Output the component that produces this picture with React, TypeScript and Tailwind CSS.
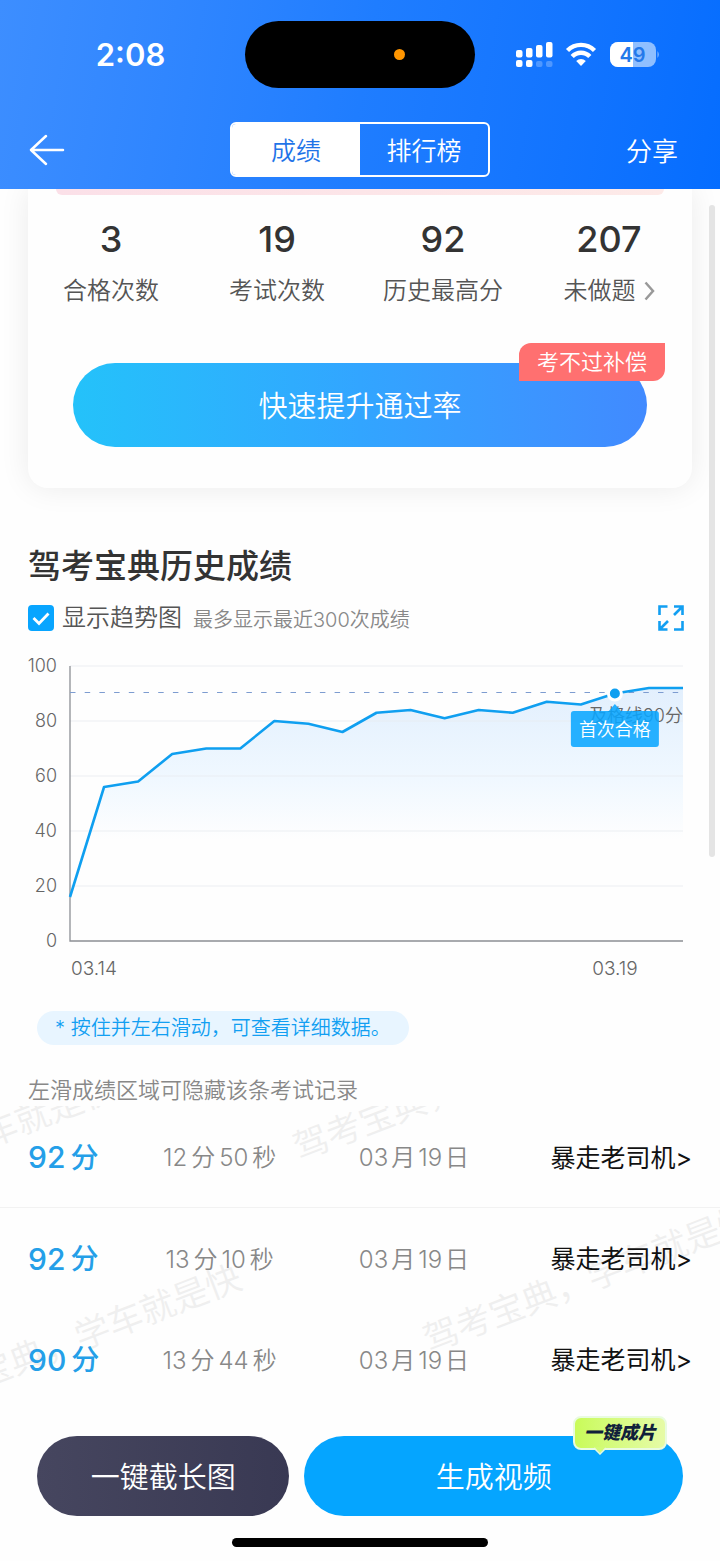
import { useState } from "react";

const stats = [
  { value: "3", label: "合格次数" },
  { value: "19", label: "考试次数" },
  { value: "92", label: "历史最高分" },
  { value: "207", label: "未做题", link: true },
];

const scores = [16, 56, 58, 68, 70, 70, 80, 79, 76, 83, 84, 81, 84, 83, 87, 86, 90, 92, 92];

const records = [
  { score: 92, min: 12, sec: 50, month: "03", day: "19", rank: "暴走老司机" },
  { score: 92, min: 13, sec: 10, month: "03", day: "19", rank: "暴走老司机" },
  { score: 90, min: 13, sec: 44, month: "03", day: "19", rank: "暴走老司机" },
];

// chart geometry, in svg units
const LEFT = 42;
const RIGHT = 655;
const TOP = 16;
const BOTTOM = 291;

const px = (i: number) => LEFT + (i * (RIGHT - LEFT)) / (scores.length - 1);
const py = (v: number) => BOTTOM - (v * (BOTTOM - TOP)) / 100;

function StatusIcons() {
  return (
    <svg width="144" height="28" viewBox="0 0 144 28" aria-hidden="true">
      <g fill="#fff">
        <rect x="0" y="9" width="6.500" height="7.500" rx="2" />
        <rect x="10" y="7" width="6.500" height="9.500" rx="2" />
        <rect x="20" y="4" width="6.500" height="12.500" rx="2" />
        <rect x="30" y="1" width="6.500" height="15.500" rx="2" />
        <rect x="0" y="19" width="6.500" height="7" rx="2" />
        <rect x="10" y="19" width="6.500" height="7" rx="2" />
        <rect x="20" y="20" width="6.500" height="6" rx="2" opacity="0.25" />
        <rect x="30" y="20" width="6.500" height="6" rx="2" opacity="0.25" />
      </g>
      <g fill="none" stroke="#fff" strokeWidth="4.4">
        <path d="M51.5 9.500 A19 19 0 0 1 78.5 9.500" />
        <path d="M56.2 15.600 A12 12 0 0 1 73.8 15.600" />
      </g>
      <path d="M60.2 20 A7 7 0 0 1 69.8 20 L65 25 Z" fill="#fff" />
      <clipPath id="charge">
        <rect x="94" y="1" width="23" height="25" />
      </clipPath>
      <rect x="94" y="1" width="46" height="25" rx="8" fill="#8fbfff" />
      <rect x="94" y="1" width="46" height="25" rx="8" fill="#fff" clipPath="url(#charge)" />
      <path d="M141.5 10 Q144 13.500 141.500 17 Z" fill="#8fbfff" />
      <text x="116.500" y="20.500" textAnchor="middle" fontSize="20" fontWeight="600" fill="#2379ea">
        49
      </text>
    </svg>
  );
}

function Header() {
  const [tab, setTab] = useState("score");
  const on = "bg-white text-[#1f74e8]";
  const off = "text-white";

  return (
    <header className="relative bg-linear-100 from-[#3d8eff] via-[#1f7dff] to-[#056dff] pt-[21px] pb-3 text-white">
      <div className="grid grid-cols-[1fr_230px_1fr] items-center">
        <div className="pl-4 text-center text-[31px] leading-10 font-semibold">2:08</div>
        <div className="flex h-[67px] items-center rounded-full bg-black pl-[149px]">
          <span className="size-[11px] rounded-full bg-[#ff9500]" />
        </div>
        <div className="pl-[41px]">
          <StatusIcons />
        </div>
      </div>
      <div className="mt-[34px] grid grid-cols-[1fr_260px_1fr] items-center">
        <button aria-label="返回" className="ml-[29px] justify-self-start">
          <svg width="36" height="32" viewBox="0 0 36 32" fill="none" stroke="#fff" strokeWidth="2.5" strokeLinecap="round" strokeLinejoin="round">
            <path d="M17 2 L2 16 L17 30 M2 16 H34" />
          </svg>
        </button>
        <div className="grid h-[55px] grid-cols-2 overflow-hidden rounded-md border-2 border-white text-[25px]">
          <button className={`pt-1 ${tab === "score" ? on : off}`} onClick={() => setTab("score")}>
            成绩
          </button>
          <button className={`pt-1 ${tab === "rank" ? on : off}`} onClick={() => setTab("rank")}>
            排行榜
          </button>
        </div>
        <button className="mr-[42px] justify-self-end pt-1 text-[26px]">分享</button>
      </div>
    </header>
  );
}

function SummaryCard() {
  return (
    <section className="mx-7 rounded-b-[20px] pb-[41px] shadow-[0_0_30px_rgba(0,0,0,0.08)]">
      <div className="mx-7 h-[6px] rounded-b-lg bg-linear-to-r from-[#fbe0e8] to-[#fdeae8]" />
      <dl className="mt-6 grid grid-cols-4 text-center">
        {stats.map((s) => (
          <div key={s.label} className="flex flex-col-reverse gap-4">
            <dt className="flex items-center justify-center gap-2 text-2xl leading-8 text-[#555]">
              {s.label}
              {s.link && (
                <svg width="11" height="20" viewBox="0 0 11 20" fill="none" stroke="#999" strokeWidth="2.5">
                  <path d="M1.500 1.500 L9 10 L1.500 18.500" />
                </svg>
              )}
            </dt>
            <dd className="text-4xl leading-10 font-medium text-[#333]">{s.value}</dd>
          </div>
        ))}
      </dl>
      <div className="relative mx-[45px] mt-14">
        <button className="h-[84px] w-full rounded-full bg-linear-to-r from-[#24c2fa] via-[#32a5ff] to-[#418aff] pt-1 text-[29px] text-white">
          快速提升通过率
        </button>
        <span className="absolute -top-5 -right-[18px] rounded-tl-xl rounded-br-xl bg-[#ff7070] px-[18px] text-[22px] leading-[38px] text-white">
          考不过补偿
        </span>
      </div>
    </section>
  );
}

function TrendChart() {
  const line = scores.map((v, i) => `${px(i)},${py(v)}`).join(" ");
  const passX = px(16);

  return (
    <svg className="mt-4 block w-full" viewBox="0 0 664 335" fontSize="18" fill="#666">
      <defs>
        <linearGradient id="area" gradientUnits="userSpaceOnUse" x1="0" y1="37" x2="0" y2="190">
          <stop offset="0" stopColor="#e2effd" />
          <stop offset="0.6" stopColor="#f0f8ff" />
          <stop offset="1" stopColor="#fefefe" />
        </linearGradient>
      </defs>
      <polygon points={`${LEFT},${BOTTOM} ${line} ${RIGHT},${BOTTOM}`} fill="url(#area)" />
      {[0, 20, 40, 60, 80, 100].map((v) => (
        <g key={v}>
          {v > 0 && <line x1={LEFT} x2={RIGHT} y1={py(v)} y2={py(v)} stroke="#e9ebf0" strokeOpacity="0.8" />}
          <text x="29" y={py(v) + 6} textAnchor="end">
            {v}
          </text>
        </g>
      ))}
      <path d={`M${LEFT} ${TOP} V${BOTTOM} H${RIGHT}`} fill="none" stroke="#8c8f94" strokeWidth="1.300" />
      <line x1={LEFT} x2={RIGHT} y1="42.500" y2="42.500" stroke="#7d9cd0" strokeWidth="1" strokeDasharray="5.500 9.200" />
      <polyline points={line} fill="none" stroke="#0f9ff0" strokeWidth="2.600" strokeLinejoin="round" />
      <text x={RIGHT} y="72" textAnchor="end">
        及格线90分
      </text>
      <circle cx={passX} cy={py(90)} r="6.500" fill="#0f9ff0" stroke="#fff" strokeWidth="3" />
      <g fill="#08a5ff" fillOpacity="0.87">
        <rect x={passX - 44} y="61" width="88" height="36" rx="3" />
        <path d={`M${passX - 6} 61 L${passX} 54 L${passX + 6} 61 Z`} />
      </g>
      <text x={passX} y="86" textAnchor="middle" fill="#fff">
        首次合格
      </text>
      <g fontSize="19">
        <text x={LEFT + 1} y="325">
          03.14
        </text>
        <text x={passX} y="325" textAnchor="middle">
          03.19
        </text>
      </g>
    </svg>
  );
}

function History() {
  return (
    <section className="mt-[58px] px-7">
      <h2 className="text-[33px] leading-10 font-medium text-[#333]">驾考宝典历史成绩</h2>
      <div className="mt-4 flex h-8 items-center">
        <label className="flex items-center gap-2 text-2xl text-[#555]">
          <span className="grid">
            <input
              type="checkbox"
              defaultChecked
              className="peer col-start-1 row-start-1 size-[26px] appearance-none rounded-sm border-2 border-[#08a5ff] checked:bg-[#08a5ff]"
            />
            <svg
              className="pointer-events-none invisible col-start-1 row-start-1 peer-checked:visible"
              width="26"
              height="26"
              viewBox="0 0 26 26"
              fill="none"
              stroke="#fff"
              strokeWidth="2.800"
            >
              <path d="M5.500 13 L11 18.500 L20.500 8.500" />
            </svg>
          </span>
          显示趋势图
        </label>
        <span className="ml-[11px] pt-1 text-xl text-[#888]">最多显示最近300次成绩</span>
        <button aria-label="全屏" className="mr-2 ml-auto">
          <svg width="26" height="26" viewBox="0 0 26 26" fill="none" stroke="#129ff2" strokeWidth="2.600">
            <path d="M1.500 10 V1.500 H9.500" />
            <path d="M16 1.500 H24.500 V10 M24 2 L16 10" />
            <path d="M1.500 16 V24.500 H9.500 M2 24 L10 16" />
            <path d="M24.500 16 V24.500 H16" />
          </svg>
        </button>
      </div>
      <TrendChart />
      <p className="mt-[26px] ml-[9px] w-fit rounded-full bg-[#e8f5ff] px-[18px] text-xl leading-[34px] text-[#129ff2]">
        * 按住并左右滑动，可查看详细数据。
      </p>
      <p className="mt-[29px] text-[22px] leading-8 text-[#888]">左滑成绩区域可隐藏该条考试记录</p>
    </section>
  );
}

const MARK = "absolute w-[350px] -rotate-21 text-[35px] leading-10 whitespace-nowrap text-[#efefef]";

function Records() {
  return (
    <section className="relative overflow-hidden">
      <div aria-hidden="true">
        <span className={`${MARK} top-[22px] -left-[224px]`}>驾考宝典，学车就是快</span>
        <span className={`${MARK} -top-[40px] left-[283px]`}>驾考宝典，学车就是快</span>
        <span className={`${MARK} top-[212px] -left-[99px]`}>驾考宝典，学车就是快</span>
        <span className={`${MARK} top-[152px] left-[413px]`}>驾考宝典，学车就是快</span>
      </div>
      <table className="relative w-full table-fixed text-center text-2xl text-[#888]">
        <tbody>
          {records.map((r, i) => (
            <tr key={i} className="h-[101px] border-b border-transparent first:border-[#f2f2f2]">
              <td className="w-[17%] pt-1 pl-7 text-left text-[#249fe8]">
                <span className="flex items-center gap-[5px] text-[28px] font-medium">
                  <span className="text-[30px]">{r.score}</span>分
                </span>
              </td>
              <td className="w-[27%] pt-1">
                <span className="flex justify-center gap-1">
                  <span>{r.min}</span>分<span>{r.sec}</span>秒
                </span>
              </td>
              <td className="w-[27%] pt-1">
                <span className="flex justify-center gap-[3px]">
                  <span>{r.month}</span>月<span>{r.day}</span>日
                </span>
              </td>
              <td className="pt-1 pr-7 text-right">
                <a href="#" className="text-[25px] font-normal whitespace-nowrap text-[#111]">
                  {r.rank}&gt;
                </a>
              </td>
            </tr>
          ))}
        </tbody>
      </table>
    </section>
  );
}

function BottomBar() {
  return (
    <footer className="px-[37px] pt-[26px] pb-[15px]">
      <div className="grid grid-cols-[2fr_3fr] gap-[15px] text-[29px] text-white">
        <button className="h-20 rounded-full bg-linear-to-r from-[#46465f] to-[#393953] pt-1">一键截长图</button>
        <div className="relative">
          <button className="h-20 w-full rounded-full bg-[#05a5ff] pt-1">生成视频</button>
          <span className="absolute -top-5 right-4 rounded-lg border-2 border-[#e9fbe0] bg-linear-to-r from-[#c9fb58] to-[#e6fba6] px-[9px] text-lg leading-[30px] font-black text-[#10203a] italic">
            一键成片
            <svg className="absolute top-[29px] left-[18px]" width="14" height="8" viewBox="0 0 14 8">
              <path d="M1 0 L7 6.500 L13 0 Z" fill="#d3fb78" />
              <path d="M1 1 L7 7 L13 1" fill="none" stroke="#e9fbe0" strokeWidth="1.500" />
            </svg>
          </span>
        </div>
      </div>
      <div className="mx-auto mt-[22px] h-[9px] w-64 rounded-full bg-black" />
    </footer>
  );
}

export default function App() {
  return (
    <div className="relative bg-[#fefefe] font-['Inter','Noto_Sans_CJK_SC',sans-serif] font-[350]">
      <Header />
      <main>
        <SummaryCard />
        <History />
        <Records />
      </main>
      <BottomBar />
      {/* scroll indicator */}
      <div className="absolute top-[205px] right-[5px] h-[652px] w-[6px] rounded-full bg-[#e4e4e4]" />
    </div>
  );
}
